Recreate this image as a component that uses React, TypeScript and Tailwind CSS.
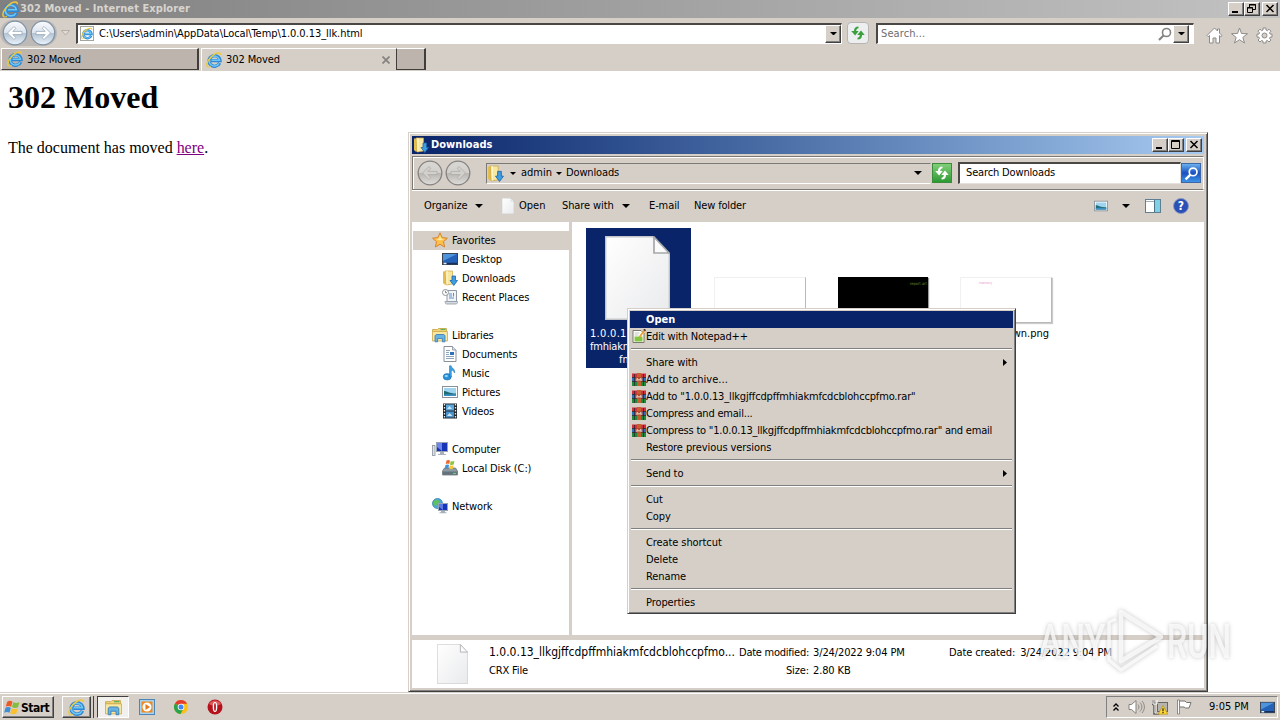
import type { ReactNode } from 'react';

/* ---------- Icons ---------- */

function IeIcon({ className = 'size-4' }: { className?: string }) {
  return (
    <svg viewBox="0 0 16 16" className={className} fill="none">
      <path d="M13.600 11a5.500 5.300 0 1 1 .4-2.400H5" stroke="#2f86d2" strokeWidth="3.300" />
      <path d="M13 11.300a5.200 5 0 1 1 .5-3.100H5.500" stroke="#6cc8f5" strokeWidth="1.500" />
      <path d="M1.600 14.900C-.8 12 3.500 4.800 8.600 2.100c3.200-1.700 6-1.600 6 .9" stroke="#efc83a" strokeWidth="1.400" />
      <path d="M1.600 14.900c1 .5 2.200 0 3.200-.7" stroke="#efc83a" strokeWidth="1" />
    </svg>
  );
}

function DownloadsIcon({ className = 'size-4' }: { className?: string }) {
  return (
    <svg viewBox="0 0 16 16" className={className}>
      <path d="M1 1.500h6v13H2.500L1 13z" fill="#e3bd50" />
      <path d="M3 1h7.500v13L4 15z" fill="#f7e79f" stroke="#cfa53c" strokeWidth=".7" />
      <path d="M5 1v13.500" stroke="#fff6c8" strokeWidth="1.200" />
      <path d="M10 6h3.500v4.500h2L11.800 15.500 8 10.500h2z" fill="#3f9ee0" stroke="#1c66b0" strokeWidth=".8" />
    </svg>
  );
}

function StarIcon() {
  return (
    <svg viewBox="0 0 16 16" className="size-4">
      <path d="M8 .8l2.200 4.800 5.200.6-3.900 3.500 1.100 5.300L8 12.300 3.400 15l1.100-5.300L.6 6.200l5.200-.6z" fill="#fbc14a" stroke="#d9822b" strokeWidth="1" />
      <path d="M8 3l1 3.500 3 .4-4 1.500-4-1.500 3-.4z" fill="#ffe9a0" />
    </svg>
  );
}

function DesktopIcon({ className = 'size-4' }: { className?: string }) {
  return (
    <svg viewBox="0 0 16 16" className={className}>
      <rect x=".5" y="2.500" width="15" height="11" fill="#2462b8" stroke="#39424f" />
      <path d="M1 3h14L1 10z" fill="#4d94dc" />
      <path d="M1 12.500h14" stroke="#15305e" strokeWidth="1.500" />
      <path d="M1.500 12.500h3" stroke="#e3f0fa" strokeWidth="1.500" />
    </svg>
  );
}

function RecentIcon() {
  return (
    <svg viewBox="0 0 16 16" className="size-4">
      <path d="M5 1.500h9.500v11H5z" fill="#f0f4f8" stroke="#8f9aa6" />
      <path d="M3 12.500h12.500c0 1.500-.5 2.500-1.500 2.500H4.500c-1 0-1.500-1-1.500-2.500z" fill="#d3d9df" stroke="#8f9aa6" strokeWidth=".8" />
      <path d="M7 5h3M7 7h3M7 9h5M11.500 4v3.500" stroke="#5c8fc4" />
      <circle cx="3.500" cy="3.500" r="3" fill="#fff" stroke="#8c949c" />
      <path d="M3.500 1.800v1.900H5" stroke="#555" fill="none" strokeWidth=".7" />
    </svg>
  );
}

function LibrariesIcon({ className = 'size-4' }: { className?: string }) {
  return (
    <svg viewBox="0 0 16 16" className={className}>
      <path d="M.5 2.500h5l1-1h8v3H.5z" fill="#f1d67c" stroke="#c8a03f" strokeWidth=".8" />
      <path d="M8.500 2.500h5" stroke="#5bb560" strokeWidth="1.200" />
      <path d="M.5 4.500h15v9.500H.5z" fill="#f8e7a1" stroke="#cfaa4b" strokeWidth=".8" />
      <path d="M3 14.800V9.500C3 8 4 7.500 5 7.500h6c1.200 0 2 .6 2 2v5.300h-2.600v-3.300H5.600v3.300z" fill="#66b4e3" stroke="#3379b5" strokeWidth=".8" />
    </svg>
  );
}

function DocumentIcon() {
  return (
    <svg viewBox="0 0 16 16" className="size-4">
      <path d="M2 .5h8.500L14 4v11.500H2z" fill="#fff" stroke="#87919c" />
      <path d="M10.500.5V4H14" fill="#dde4ea" stroke="#87919c" strokeWidth=".8" />
      <path d="M4 4.500h4M4 6.500h3M4 8.500h3M4 10.500h8M4 12.500h8" stroke="#8da5bd" />
      <rect x="8" y="6" width="4" height="3" fill="#2c6fbb" />
    </svg>
  );
}

function MusicIcon() {
  return (
    <svg viewBox="0 0 16 16" className="size-4">
      <ellipse cx="5.200" cy="11.800" rx="4" ry="3.200" fill="#2b93dc" stroke="#1766a8" strokeWidth=".6" />
      <path d="M7.500 12V.8h1.700c.2 2.600 4.400 3.200 3.300 7.200-.5-2-1.600-2.600-3.200-3V12z" fill="#3aa3e6" stroke="#1766a8" strokeWidth=".5" />
      <ellipse cx="4.300" cy="10.900" rx="1.600" ry="1" fill="#a8dcfa" />
    </svg>
  );
}

function PicturesIcon({ className = 'size-4' }: { className?: string }) {
  return (
    <svg viewBox="0 0 16 16" className={className}>
      <rect x=".5" y="2.500" width="15" height="11" fill="#fff" stroke="#8a9199" />
      <rect x="2" y="4" width="12" height="8" fill="#9fd4f1" />
      <path d="M2 7c3 0 5 2.500 12 2.500V12H2z" fill="#1f6b73" />
      <path d="M2 10.500c4-1 8 .5 12-.5v2H2z" fill="#3c8fc2" />
    </svg>
  );
}

function VideosIcon() {
  return (
    <svg viewBox="0 0 16 16" className="size-4">
      <rect x="1" y=".5" width="14" height="15" fill="#23272c" />
      <rect x="4" y="1.500" width="8" height="6" fill="#5ba7dc" />
      <rect x="4" y="8.500" width="8" height="6" fill="#4a92cb" />
      <path d="M5 6l2.500-3L10 6zM5 13l2.500-3 3 3z" fill="#c9e4f5" />
      <path d="M2.500 1v14M13.500 1v14" stroke="#e8ecef" strokeWidth="1.300" strokeDasharray="1.500 1.500" />
    </svg>
  );
}

function ComputerIcon() {
  return (
    <svg viewBox="0 0 16 16" className="size-4">
      <rect x="4.500" y="1.500" width="11" height="9" fill="#1735b5" stroke="#9aa3b5" />
      <path d="M5 2h5v8L5 6z" fill="#6a86ec" />
      <path d="M8 11h4v2h2v1H6v-1h2z" fill="#a7b0bd" />
      <rect x=".5" y="4.500" width="2.500" height="10" fill="#dfe3e8" stroke="#89919c" strokeWidth=".8" />
    </svg>
  );
}

function WindowsFlag({ className = 'size-4' }: { className?: string }) {
  return (
    <svg viewBox="0 0 16 16" className={className}>
      <path d="M3 2.500c2-1.300 3.500-1 5 0L6.700 7.300c-1.500-1-3-1-5-.2z" fill="#ee5a24" />
      <path d="M8.800 3c1.700 1 3.500 1 5.700 0l-1.300 4.800c-2 1-4 .8-5.700-.2z" fill="#82bd3f" />
      <path d="M1.400 8.200c2-.9 3.500-.8 5 .1L5.200 13c-1.600-1-3.200-.9-5 0z" fill="#3d8fd8" />
      <path d="M7.200 8.700c1.700 1 3.500 1.100 5.700.2l-1.300 4.700c-2 1-4 .8-5.700-.2z" fill="#fbc02d" />
    </svg>
  );
}

function DiskIcon() {
  return (
    <svg viewBox="0 0 16 16" className="size-4">
      <path d="M2.500 8h11l2 3v4H.5v-4z" fill="#8c9aa3" stroke="#5f6c74" strokeWidth=".7" />
      <path d="M1 11.500h14v3.300H1z" fill="#63727b" />
      <path d="M11 13.400h3" stroke="#6de06d" />
      <path d="M4.500.6c1.300-.8 2.300-.7 3.500 0L7.300 4.100c-1.200-.7-2.200-.7-3.600 0z" fill="#ef6530" />
      <path d="M8.700 1c1.200.7 2.400.6 3.800 0l-.8 3.500c-1.400.6-2.600.6-3.700-.1z" fill="#8cc63f" />
      <path d="M3.500 4.900c1.300-.7 2.400-.7 3.600 0l-.8 3.500c-1.200-.7-2.200-.7-3.600 0z" fill="#3f93de" />
      <path d="M7.800 5.200c1.200.7 2.400.6 3.800 0l-.8 3.500c-1.400.6-2.600.6-3.700-.1z" fill="#fcc630" />
    </svg>
  );
}

function NetworkIcon() {
  return (
    <svg viewBox="0 0 16 16" className="size-4">
      <circle cx="5.500" cy="5.500" r="5" fill="#49a9dc" stroke="#2775a8" strokeWidth=".7" />
      <path d="M2 3c2-2 4-1.500 5 0S5 6 4 8 1.500 6 2 3z" fill="#5fc35a" />
      <rect x="6.500" y="5.500" width="9" height="7" fill="#1735b5" stroke="#9aa3b5" />
      <path d="M7 6h4v6L7 9z" fill="#5a78e6" />
      <path d="M9 13h4v1.200h1.500v1h-7v-1H9z" fill="#a7b0bd" />
    </svg>
  );
}

function PageIcon({ className }: { className: string }) {
  return (
    <svg viewBox="0 0 65 84" className={className} preserveAspectRatio="none">
      <defs>
        <linearGradient id="paper" x1="0" y1="0" x2="1" y2="1">
          <stop offset="0" stopColor="#ffffff" />
          <stop offset="1" stopColor="#e9eaec" />
        </linearGradient>
      </defs>
      <path d="M.7.7h47L64.300 18v65.300H.7z" fill="url(#paper)" stroke="#c3c5c8" strokeWidth="1.400" />
      <path d="M49 1v16h15z" fill="#fbfbfb" stroke="#a6a8ab" strokeWidth="1.700" />
    </svg>
  );
}

function RarIcon() {
  return (
    <svg viewBox="0 0 14 13" className="h-[13px] w-[14px]">
      <rect width="14" height="4" y=".5" fill="#cf2f3f" />
      <rect width="14" height="4" y="4.500" fill="#2f6fc0" />
      <rect width="14" height="4.500" y="8.500" fill="#1e8a3c" />
      <path d="M0 4.500h14M0 8.500h14" stroke="#2c1f25" strokeWidth=".8" />
      <path d="M2.500 1v12M11.500 1v12" stroke="#23202a" strokeWidth=".7" />
      <rect x="5" width="4" height="13" fill="#c4602c" />
      <path d="M3.500 4h7v4.500h-7z" fill="#b5482c" />
      <path d="M5 8V5.500l2 1.800 2-1.800V8" stroke="#f3ece4" fill="none" />
    </svg>
  );
}

function NotepadIcon() {
  return (
    <svg viewBox="0 0 14 14" className="size-[14px]">
      <path d="M1 1.500h8l3 3V13.500H1z" fill="#fff" stroke="#6c6c62" strokeWidth=".9" />
      <path d="M2.500 7.500h8v5h-8z" fill="#84c441" />
      <path d="M2.500 4h5M2.500 6h4" stroke="#b4b4ac" strokeWidth=".8" />
      <path d="M12.800 1L7.500 8" stroke="#e9a432" strokeWidth="1.900" />
      <path d="M11.800.3l1.800 1.300" stroke="#3a2b22" strokeWidth="1.500" />
    </svg>
  );
}

function RefreshArrows({ color, className = 'size-4' }: { color: string; className?: string }) {
  return (
    <svg viewBox="0 0 16 16" className={className} fill={color}>
      <path d="M8.500 1.500C5.500 1.500 4 3 4 6H1.200l3.900 4.500L8.700 6H6.200c0-1.500.7-2.500 2.300-2.800z" />
      <path d="M7.500 14.500c3 0 4.500-1.500 4.500-4.500h2.700L11 5.500 7.200 10h2.600c0 1.500-.7 2.500-2.300 2.800z" />
    </svg>
  );
}

function Caret({ className = 'w-[7px]' }: { className?: string }) {
  return (
    <svg viewBox="0 0 8 4" className={`shrink-0 ${className}`}>
      <path d="M0 0h8L4 4z" fill="#000" />
    </svg>
  );
}

function RoundArrow({ flip, blue, className }: { flip?: boolean; blue?: boolean; className: string }) {
  const id = blue ? 'nav-blue' : 'nav-gray';
  return (
    <svg viewBox="0 0 26 26" className={`shrink-0 ${className}`}>
      <defs>
        <linearGradient id={id} x1="0" y1="0" x2="0" y2="1">
          <stop offset="0" stopColor={blue ? '#fafcff' : '#dad8d5'} />
          <stop offset=".48" stopColor={blue ? '#dce4ed' : '#d2d0cd'} />
          <stop offset=".52" stopColor={blue ? '#b4c4d4' : '#bab7b3'} />
          <stop offset="1" stopColor={blue ? '#e9f3fb' : '#dfdddb'} />
        </linearGradient>
      </defs>
      <circle cx="13" cy="13" r="11.800" fill={`url(#${id})`} stroke={blue ? '#8193a6' : '#85827f'} strokeWidth="1.300" />
      <path
        d="M5.500 13L12 6.500l1.800 1.800-3 3.100H20v3.200h-9.200l3 3.100-1.800 1.800z"
        transform={flip ? 'matrix(-1 0 0 1 26 0)' : undefined}
        fill={blue ? '#fff' : '#d3d1ce'}
        stroke={blue ? '#8fa0b1' : '#aaa7a4'}
        strokeWidth=".7"
      />
    </svg>
  );
}

/* ---------- Shared pieces ---------- */

const raised =
  'border border-t-white border-l-white border-r-[#404040] border-b-[#404040] shadow-[inset_-1px_-1px_0_#808080] bg-[#d5cfc8]';

function WindowButtons({ restore }: { restore?: boolean }) {
  return (
    <div className="flex items-center">
      <div className={`h-[14px] w-4 ${raised}`}>
        <svg viewBox="0 0 14 12" className="h-3 w-[14px]">
          <path d="M3 9h6" stroke="#000" strokeWidth="2" />
        </svg>
      </div>
      <div className={`h-[14px] w-4 ${raised}`}>
        <svg viewBox="0 0 14 12" className="h-3 w-[14px]" fill="none" stroke="#000">
          {restore ? (
            <path d="M4.500 4V1.500h6v5H8M4 2h7M2.500 4.500h5v5h-5zM2 5h6" />
          ) : (
            <path d="M2.500 1.500h8v8h-8zM2 2.500h9" />
          )}
        </svg>
      </div>
      <div className={`ml-0.5 h-[14px] w-4 ${raised}`}>
        <svg viewBox="0 0 14 12" className="h-3 w-[14px]">
          <path d="M3.500 2l7 7M10.500 2l-7 7" stroke="#000" strokeWidth="1.500" />
        </svg>
      </div>
    </div>
  );
}

/* ---------- Browser ---------- */

function Browser() {
  return (
    <>
      <header className="flex h-[18px] items-center bg-linear-to-r from-[#808080] to-[#c2c2c2] pr-0.5 pl-0.5">
        <IeIcon className="size-[17px]" />
        <h1 className="ml-px flex-1 pt-px text-[11px] font-bold tracking-[0.07px] text-[#d8d4ce]">302 Moved - Internet Explorer</h1>
        <WindowButtons restore />
      </header>

      <div className="flex h-[30px] items-center">
        <div className="flex h-[26px] w-[57px] shrink-0 items-center rounded-full bg-[#bdb9b6] pl-[2px]">
          <RoundArrow blue className="size-[26px]" />
          <RoundArrow blue flip className="ml-0.5 size-[26px]" />
        </div>
        <svg viewBox="0 0 9 6" className="ml-1 w-[9px]">
          <path d="M.5.5h8l-4 4.500z" fill="#dedad5" stroke="#a9a49d" strokeWidth=".8" />
        </svg>
        <div className="ml-1.5 flex h-[21px] w-[766px] items-center border border-t-2 border-l-2 border-white border-t-[#4a4744] border-l-[#4a4744] bg-white pl-0.5">
          <div className="flex h-[15px] w-[14px] items-center justify-center border border-[#a5a5a0]">
            <IeIcon className="size-[13px]" />
          </div>
          <span className="ml-[5px] flex-1 pt-0.5 text-[11px] tracking-[-0.06px]">C:\Users\admin\AppData\Local\Temp\1.0.0.13_llk.html</span>
          <div className={`flex h-[18px] w-4 items-center justify-center ${raised}`}>
            <Caret />
          </div>
        </div>
        <div className="ml-[5px] flex size-[22px] items-center justify-center rounded-sm border border-[#b7b5b2] bg-[#eceef0]">
          <RefreshArrows color="#38a03c" />
        </div>
        <div className="ml-[7px] flex h-[21px] w-[318px] items-center border border-t-2 border-l-2 border-white border-t-[#4a4744] border-l-[#4a4744] bg-white pl-[3px]">
          <span className="flex-1 pt-0.5 text-[11px] tracking-[0.1px] text-[#6d6d6d]">Search...</span>
          <svg viewBox="0 0 14 14" className="mr-px size-[14px]" fill="none" stroke="#85837f">
            <circle cx="8.500" cy="5.500" r="4" strokeWidth="1.600" />
            <path d="M5.500 8.500l-4.500 4.500" strokeWidth="2.200" />
          </svg>
          <div className={`mr-1 flex h-[18px] w-4 items-center justify-center ${raised}`}>
            <Caret />
          </div>
        </div>
        <div className="ml-3 flex items-center gap-2 pt-1">
          <svg viewBox="0 0 17 17" className="size-[17px]" fill="#fff" stroke="#8d8b88">
            <path d="M8.500 1L1 8.500l1.200 1.200L3.500 8.500v7.500h3.500v-5h3v5h3.500V8.500l1.300 1.200L16 8.500l-2.500-2.500V2h-2v2z" />
          </svg>
          <svg viewBox="0 0 17 17" className="size-[17px]" fill="#fff" stroke="#8d8b88">
            <path d="M8.500 1l2 5.500 6 .2-4.700 3.700 1.700 5.600-5-3.300-5 3.300 1.700-5.600L.5 6.700l6-.2z" />
          </svg>
          <svg viewBox="0 0 17 17" className="size-[17px]" fill="#fff" stroke="#8d8b88">
            <path d="M7 1h3v2l1.500.6L13 2.200 15 4.200l-1.500 1.500.6 1.400H16v3h-1.900l-.6 1.400L15 13l-2 2-1.500-1.500-1.500.6V16H7v-1.900l-1.500-.6L4 15l-2-2 1.500-1.500-.6-1.400H1v-3h1.900l.6-1.400L2 4.200l2-2 1.500 1.400L7 3z" />
            <circle cx="8.500" cy="8.500" r="2.500" fill="#d5cfc8" />
          </svg>
        </div>
      </div>

      <nav className="flex h-[23px] pl-px text-[11px]">
        <div className="flex h-[22px] w-[198px] items-center border border-t-white border-r-2 border-r-[#403d3a] border-b-[#403d3a] border-l-white bg-[#bdb4ae] pl-[5px]">
          <IeIcon />
          <span className="ml-1 pt-0.5 tracking-[-0.1px]">302 Moved</span>
        </div>
        <div className="ml-[2px] flex h-[23px] w-[195px] items-center border-t border-l border-white pr-[6px] pb-px pl-[4px]">
          <IeIcon />
          <span className="ml-1 flex-1 pt-0.5 tracking-[-0.1px]">302 Moved</span>
          <svg viewBox="0 0 8 8" className="size-2">
            <path d="M.5.5l7 7M7.500.5l-7 7" stroke="#85817c" strokeWidth="1.700" />
          </svg>
        </div>
        <div className="h-[22px] w-[30px] border border-r-2 border-[#403d3a] border-t-white bg-[#bdb4ae]" />
      </nav>

      <main className="flex-1 bg-white pt-2 pl-2 font-['Liberation_Serif',serif] text-black">
        <h2 className="text-[32px] leading-[37px] font-bold">302 Moved</h2>
        <p className="mt-[23px] text-base leading-[18px] tracking-[-0.01px]">
          The document has moved <a className="text-[#800080] underline">here</a>.
        </p>
      </main>
    </>
  );
}

/* ---------- Explorer ---------- */

type TreeRow = { label: string; icon: ReactNode; root?: boolean; selected?: boolean };

const tree: TreeRow[][] = [
  [
    { label: 'Favorites', icon: <StarIcon />, root: true, selected: true },
    { label: 'Desktop', icon: <DesktopIcon /> },
    { label: 'Downloads', icon: <DownloadsIcon /> },
    { label: 'Recent Places', icon: <RecentIcon /> },
  ],
  [
    { label: 'Libraries', icon: <LibrariesIcon />, root: true },
    { label: 'Documents', icon: <DocumentIcon /> },
    { label: 'Music', icon: <MusicIcon /> },
    { label: 'Pictures', icon: <PicturesIcon /> },
    { label: 'Videos', icon: <VideosIcon /> },
  ],
  [
    { label: 'Computer', icon: <ComputerIcon />, root: true },
    { label: 'Local Disk (C:)', icon: <DiskIcon /> },
  ],
  [{ label: 'Network', icon: <NetworkIcon />, root: true }],
];

function Explorer() {
  return (
    <section className="absolute top-[132px] left-[408px] flex h-[560px] w-[800px] flex-col border border-t-[#d5cfc8] border-r-[#404040] border-b-[#404040] border-l-[#d5cfc8] bg-[#d5cfc8] p-[3px] text-[11px] whitespace-nowrap shadow-[inset_1px_1px_0_#fff,inset_-1px_-1px_0_#808080]">
      <div className="flex h-[18px] shrink-0 items-center bg-linear-to-r from-[#0a246a] to-[#a6caf0] pr-0.5 pl-px">
        <DownloadsIcon />
        <span className="ml-0.5 flex-1 pt-px font-bold tracking-[0.05px] text-white">Downloads</span>
        <WindowButtons />
      </div>

      <div className="mt-0.5 flex h-[34px] shrink-0 items-center border border-[#7d7a76] border-r-white pl-1 shadow-[inset_1px_1px_0_#fff,0_1px_0_#fff]">
        <RoundArrow className="size-[26px]" />
        <RoundArrow flip className="ml-0.5 size-[26px]" />
        <div className="ml-[15px] flex h-[21px] w-[445px] items-center border border-[#7d7a76] border-r-transparent border-b-white">
          <DownloadsIcon className="size-[17px]" />
          <Caret className="ml-1.5 w-[6px]" />
          <span className="ml-[5px]">admin</span>
          <Caret className="ml-1 w-[6px]" />
          <span className="ml-1 flex-1 tracking-[-0.15px]">Downloads</span>
          <Caret className="mr-2 w-2" />
        </div>
        <div className="ml-px flex size-5 shrink-0 items-center justify-center border border-[#3c8c3c] bg-linear-to-b from-[#7fcf7a] to-[#2b9a32]">
          <RefreshArrows color="#fff" />
        </div>
        <div className="ml-1.5 flex h-[22px] w-[223px] items-center border border-t-2 border-l-2 border-t-[#4a4744] border-r-[#e5e1dc] border-b-[#e5e1dc] border-l-[#4a4744] bg-white pl-1.5">
          <span className="tracking-[-0.15px]">Search Downloads</span>
        </div>
        <div className="flex size-5 shrink-0 items-center justify-center border border-[#3c67a8] bg-linear-to-b from-[#6cb0ec] via-[#1c4fc0] to-[#3f94e6]">
          <svg viewBox="0 0 14 14" className="size-[15px]" fill="none" stroke="#fff">
            <circle cx="8.500" cy="5.500" r="3.600" strokeWidth="1.600" />
            <path d="M6 8l-4.500 4.500" strokeWidth="2.200" />
          </svg>
        </div>
      </div>

      <div className="flex h-8 shrink-0 items-center pr-[15px] pl-3 [&>span]:pt-px">
        <span className="w-[43px] tracking-[-0.1px]">Organize</span>
        <Caret className="ml-[8px] w-2" />
        <PageIcon className="ml-[19px] h-4 w-3" />
        <span className="ml-[5px] w-[27px]">Open</span>
        <span className="ml-4 w-[52px] tracking-[-0.1px]">Share with</span>
        <Caret className="ml-2 w-2" />
        <span className="ml-[19px] w-[29px] tracking-[-0.1px]">E-mail</span>
        <span className="ml-4 flex-1 tracking-[-0.15px]">New folder</span>
        <PicturesIcon className="size-[14px]" />
        <Caret className="ml-[14px] w-2" />
        <svg viewBox="0 0 16 16" className="ml-[15px] size-4">
          <rect x=".5" y="1.500" width="15" height="13" fill="#fff" stroke="#5f7e94" />
          <rect x="10" y="2" width="5" height="12" fill="#7fd0e2" />
          <path d="M1 3.500h9" stroke="#9bb0bf" />
          <path d="M9.500 2v12" stroke="#4f7186" />
        </svg>
        <div className="ml-3 flex size-4 items-center justify-center rounded-full border border-[#8a98c0] bg-[#2a4fb5] text-[12px] leading-none font-bold text-white">
          ?
        </div>
      </div>

      <div className="flex min-h-0 flex-1 bg-white">
        <aside className="w-[160px] shrink-0 border-r-[3px] border-[#d5cfc8] pt-[9px]">
          {tree.map((group, i) => (
            <ul key={i} className="mb-[19px] pl-px">
              {group.map((row) => (
                <li
                  key={row.label}
                  className={`flex h-[19px] items-center ${row.selected ? 'bg-[#d5cfc8]' : ''} ${row.root ? 'pl-[19px]' : 'pl-[29px]'}`}
                >
                  <span className="pb-px">{row.icon}</span>
                  <span className="ml-1 pt-0.5 tracking-[-0.12px]">{row.label}</span>
                </li>
              ))}
            </ul>
          ))}
        </aside>

        <div className="flex items-start pt-1.5 pl-3.5">
          <div className="h-[140px] w-[105px] bg-[#0a246a] pt-2 pl-1 leading-[13px] text-white">
            <PageIcon className="mb-[7px] ml-[15px] h-[84px] w-[65px]" />
            <p className="tracking-[0.3px]">1.0.0.13_llkgjffc</p>
            <p className="tracking-[-0.2px]">fmhiakmfcdcblohccp</p>
            <p className="pl-[29px]">fmo.crx</p>
          </div>
          <div className="mt-[49px] ml-[23px] h-[46px] w-[92px] border border-[#f0f0f0] border-r-[#b9b9b9] border-b-[#b9b9b9]" />
          <div className="mt-[49px] ml-8 h-[46px] w-[90px] bg-black pt-[3px] pr-px text-right text-[4px] leading-[8px] text-[#5f8f2c] shadow-[1px_1px_1px_#999]">
            report.art
          </div>
          <div className="mt-[49px] ml-8 w-[92px]">
            <div className="h-[46px] border border-[#f0f0f0] border-r-[#b9b9b9] border-b-[#b9b9b9] pt-0.5 pl-[18px] text-[3.500px] leading-[6px] text-[#e79ad0] shadow-[1px_1px_1px_#ccc]">
              memory
            </div>
            <p className="mt-1 pr-[3px] text-right leading-[13px]">wn.png</p>
          </div>
        </div>
      </div>

      <footer className="flex h-[53px] shrink-0 border-t-[5px] border-[#d5cfc8] bg-white">
        <PageIcon className="mt-[4px] ml-[25px] h-10 w-[31px]" />
        <div className="mt-1 ml-[21px] w-[250px]">
          <p className="text-[12px] leading-[17px]">1.0.0.13_llkgjffcdpffmhiakmfcdcblohccpfmo...</p>
          <p className="pt-px leading-[18px] tracking-[-0.15px]">CRX File</p>
        </div>
        <div className="mt-1 grid h-9 grid-cols-[70px_132px] gap-x-1 leading-[18px] tracking-[-0.12px]">
          <span className="text-right tracking-[-0.25px]">Date modified:</span>
          <span>3/24/2022 9:04 PM</span>
          <span className="text-right">Size:</span>
          <span>2.80 KB</span>
        </div>
        <p className="mt-1 ml-1 leading-[18px] tracking-[-0.13px]">
          Date created:<span className="ml-[5px]">3/24/2022 9:04 PM</span>
        </p>
      </footer>
    </section>
  );
}

/* ---------- Context menu ---------- */

type MenuEntry = { label: string; icon?: ReactNode; submenu?: boolean; active?: boolean; tracking?: string };

const menuGroups: MenuEntry[][] = [
  [
    { label: 'Open', active: true, tracking: 'tracking-normal' },
    { label: 'Edit with Notepad++', icon: <NotepadIcon />, tracking: 'tracking-[-0.17px]' },
  ],
  [
    { label: 'Share with', submenu: true },
    { label: 'Add to archive...', icon: <RarIcon />, tracking: 'tracking-[0.05px]' },
    { label: 'Add to "1.0.0.13_llkgjffcdpffmhiakmfcdcblohccpfmo.rar"', icon: <RarIcon />, tracking: 'tracking-[-0.16px]' },
    { label: 'Compress and email...', icon: <RarIcon />, tracking: 'tracking-[-0.2px]' },
    {
      label: 'Compress to "1.0.0.13_llkgjffcdpffmhiakmfcdcblohccpfmo.rar" and email',
      icon: <RarIcon />,
      tracking: 'tracking-[-0.205px]',
    },
    { label: 'Restore previous versions' },
  ],
  [{ label: 'Send to', submenu: true }],
  [{ label: 'Cut' }, { label: 'Copy' }],
  [{ label: 'Create shortcut' }, { label: 'Delete' }, { label: 'Rename' }],
  [{ label: 'Properties' }],
];

function ContextMenu() {
  return (
    <div className="absolute top-[308px] left-[627px] h-[306px] w-[389px] border border-t-[#d5cfc8] border-r-[#404040] border-b-[#404040] border-l-[#d5cfc8] bg-[#d5cfc8] p-0.5 text-[11px] shadow-[inset_1px_1px_0_#fff,inset_-1px_-1px_0_#808080]">
      {menuGroups.map((group, i) => (
        <div key={i}>
          {i > 0 && (
            <div className="h-[9px] px-px pt-[3px]">
              <div className="h-0.5 border-t border-b border-t-[#808080] border-b-white" />
            </div>
          )}
          {group.map((entry) => (
            <div
              key={entry.label}
              className={`flex h-[17px] items-center whitespace-nowrap ${entry.active ? 'bg-[#0a246a] font-bold text-white' : ''}`}
            >
              <span className="flex w-4 justify-end pb-px">{entry.icon}</span>
              <span className={`flex-1 pt-px ${entry.tracking ?? 'tracking-[-0.09px]'}`}>{entry.label}</span>
              {entry.submenu && (
                <svg viewBox="0 0 4 7" className="mr-1.5 h-[7px] w-1">
                  <path d="M0 0l4 3.500L0 7z" />
                </svg>
              )}
            </div>
          ))}
        </div>
      ))}
    </div>
  );
}

/* ---------- Taskbar ---------- */

function Taskbar() {
  return (
    <footer className="flex h-7 shrink-0 items-center border-t border-[#d5cfc8] pt-px pl-0.5 text-[11px] shadow-[inset_0_1px_0_#fff]">
      <div className={`flex h-[22px] w-[52px] items-center ${raised}`}>
        <WindowsFlag className="ml-px size-[17px]" />
        <span className="pt-px text-[12px] font-bold tracking-[-0.5px]">Start</span>
      </div>
      <div className={`ml-2 flex h-[22px] w-[29px] items-center justify-center ${raised}`}>
        <IeIcon className="size-[17px]" />
      </div>
      <div className="h-[22px] w-[3px] border-r border-[#404040] bg-[#d5cfc8]" />
      <div className="ml-[3px] flex h-[22px] w-8 items-center justify-center border border-[#404040] border-r-white border-b-white bg-[#f2f0ed]">
        <LibrariesIcon className="size-[17px]" />
      </div>
      <svg viewBox="0 0 16 16" className="ml-[10px] size-4">
        <rect x=".5" y=".5" width="15" height="15" fill="#a8d2f0" stroke="#4b86b8" />
        <rect x="2.500" y="2.500" width="11" height="11" fill="#f08a1d" />
        <circle cx="8" cy="8" r="4.500" fill="#fff" />
        <path d="M6.500 5l4.500 3-4.500 3z" fill="#e5791a" />
      </svg>
      <svg viewBox="0 0 16 16" className="ml-[18px] size-4">
        <circle cx="8" cy="8" r="7" fill="#fbc116" />
        <path d="M8 8L1.900 4.500A7 7 0 0 1 14.100 4.700H8z" fill="#e33b2e" />
        <path d="M8 8L1.900 4.500A7 7 0 0 0 7.500 15l3-5.500z" fill="#2ba24c" />
        <circle cx="8" cy="8" r="3.300" fill="#fff" />
        <circle cx="8" cy="8" r="2.500" fill="#4285f4" />
      </svg>
      <svg viewBox="0 0 16 16" className="ml-[18px] size-4">
        <circle cx="8" cy="8" r="7.500" fill="#b5121b" />
        <path d="M2 5a7 7 0 0 1 12 0c-3 2-9 2-12 0z" fill="#de5a5c" />
        <ellipse cx="8" cy="8" rx="2.300" ry="5" fill="#fff" />
        <ellipse cx="8" cy="8" rx=".9" ry="4" fill="#b5121b" />
      </svg>

      <div className="mr-0.5 ml-auto flex h-[22px] w-[172px] items-center border border-[#808080] border-r-white border-b-white pl-[6px]">
        <svg viewBox="0 0 6 8" className="h-2 w-1.5" fill="none" stroke="#000" strokeWidth="1.300">
          <path d="M.5 3.500L3 1l2.500 2.500M.5 7.500L3 5l2.500 2.500" />
        </svg>
        <svg viewBox="0 0 17 16" className="ml-[9px] h-4 w-[17px]" fill="#fff" stroke="#84807c">
          <path d="M1 5.500h2.500L8 1.500v13l-4.500-4H1z" />
          <path d="M10 5.500c1.300 1.500 1.300 3.500 0 5M12 3.500c2.500 2.800 2.500 6.200 0 9M14 2c3.200 3.500 3.200 8.500 0 12" fill="none" strokeWidth=".9" />
        </svg>
        <svg viewBox="0 0 16 16" className="ml-[7px] size-4">
          <rect x="5.500" y="3.500" width="10" height="9" fill="#b7b3ae" stroke="#6a6763" />
          <path d="M1 1v4h1.500v9.500h5" stroke="#66625e" strokeWidth="2.600" fill="none" />
          <path d="M1 1v4h4V1M3 5v9h4" stroke="#fff" fill="none" />
          <path d="M11 6.500l4.800 8.700H6.200z" fill="#ffd632" stroke="#b8921b" strokeWidth=".7" />
          <path d="M11 9.300v3M11 13v1.200" stroke="#222" strokeWidth="1.200" />
        </svg>
        <svg viewBox="0 0 16 16" className="ml-2 size-4" fill="#fff" stroke="#77736f">
          <path d="M3 2h6l1.500 1.500H15L13 9H9.500L8 8H3.500z" />
          <path d="M1.500 1h2v14h-2z" strokeWidth=".8" />
        </svg>
        <span className="ml-[17px] w-[39px] pt-px whitespace-nowrap">9:05 PM</span>
        <DesktopIcon className="ml-3 size-[15px]" />
      </div>
    </footer>
  );
}

function Watermark() {
  return (
    <div className="pointer-events-none absolute top-[608px] left-[1039px] flex h-[66px] w-[196px] items-center font-[Roboto,sans-serif] text-[48px] leading-none font-medium text-white/75 drop-shadow-[0_0_2px_rgba(0,0,0,0.3)]">
      <span className="w-[64px] origin-left scale-x-[0.7] pt-0.5">ANY</span>
      <svg viewBox="0 0 62 64" className="h-16 w-[62px] shrink-0" fill="none" stroke="#fff" strokeOpacity=".75" strokeWidth="4.500" strokeLinejoin="round">
        <path d="M18 3l40 25-40 24z" />
        <path d="M13 10l-7 3v38l12 10 36-24" strokeWidth="3.500" />
      </svg>
      <span className="ml-0.5 w-[66px] origin-left scale-x-[0.67] pt-0.5">RUN</span>
    </div>
  );
}

export default function App() {
  return (
    <div className="relative flex h-[720px] w-[1280px] flex-col overflow-hidden bg-[#d5cfc8] font-['DejaVu_Sans_Condensed','Noto_Sans',sans-serif] text-black">
      <Browser />
      <Taskbar />
      <Explorer />
      <ContextMenu />
      <Watermark />
    </div>
  );
}
